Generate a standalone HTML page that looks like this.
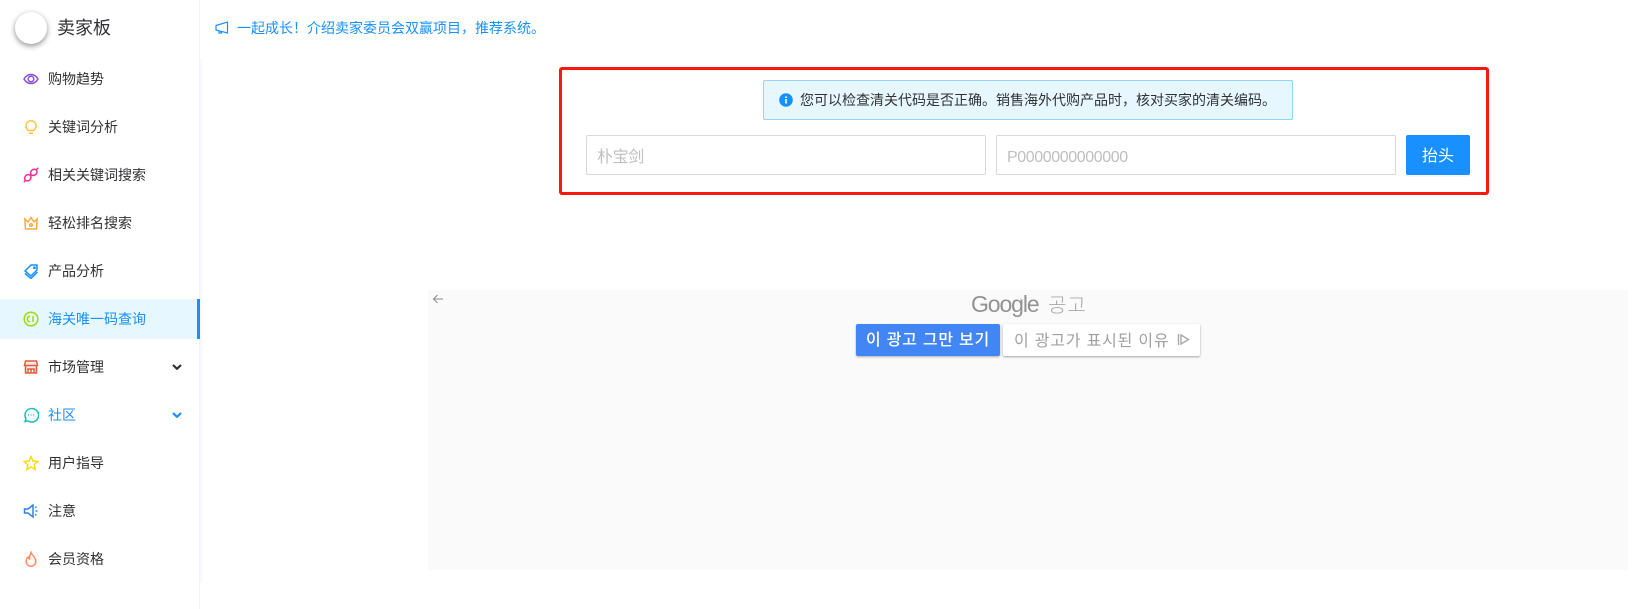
<!DOCTYPE html>
<html lang="zh"><head><meta charset="utf-8"><title>卖家板</title>
<style>
*{box-sizing:border-box}
html,body{margin:0;padding:0;width:1644px;height:609px;overflow:hidden;background:#fff;font-family:"Liberation Sans","Noto Sans CJK SC",sans-serif;color:#303133}
.abs{position:absolute}
.side{position:absolute;left:0;top:0;width:200px;height:609px;background:#fff;border-right:1px solid #f2f3f7}
.shade{position:absolute;left:200px;top:59px;width:4px;height:524px;background:linear-gradient(90deg,#f6f7fd,#fff)}
.item{position:absolute;left:0;width:200px;height:40px;line-height:40px;font-size:14px;padding-left:48px;color:#303133;white-space:nowrap}
.item svg{position:absolute;left:23px;top:12px;width:16px;height:16px;fill:none;stroke-width:1.500}
.item.on{background:#e6f7ff;color:#1890ff}
.item.on::after{content:"";position:absolute;right:0;top:0;width:3px;height:40px;background:#1890ff}
.item svg.chev{left:172px;top:17px;width:10px;height:6px;stroke-width:2.200}
.box{position:absolute;left:559px;top:67px;width:930px;height:128px;border:3px solid #f5190f;border-radius:3px}
.alert{position:absolute;left:763px;top:80px;width:530px;height:40px;background:#e6f7ff;border:1px solid #91d5ff;border-radius:2px;font-size:14px;line-height:38px;padding-left:36px;color:#303133;white-space:nowrap}
.inp{position:absolute;top:135px;height:40px;background:#fff;border:1px solid #d9d9d9;border-radius:2px;color:#bfbfbf;font-size:16px;line-height:44px;padding-left:10px;letter-spacing:-.4px}
.btn{position:absolute;left:1406px;top:135px;width:64px;height:40px;background:#1890ff;color:#fff;border-radius:2px;font-size:16px;line-height:43px;text-align:center;box-shadow:0 2px 0 rgba(0,0,0,.03)}
.ad{position:absolute;left:428px;top:290px;width:1200px;height:280px;background:#fafafa}
.kr{font-family:"Liberation Sans","Noto Sans CJK KR",sans-serif;white-space:nowrap}
</style></head><body>
<div class="side"></div><div class="shade"></div>
<div class="abs" style="left:15px;top:12px;width:32px;height:32px;border-radius:50%;background:#fff;box-shadow:0 2px 6px rgba(0,0,0,.45)"></div>
<div class="abs" style="left:57px;top:14px;font-size:18px;line-height:28px;color:#303133">卖家板</div>

<div class="item" style="top:59px">购物趋势<svg viewBox="0 0 16 16" stroke="#8a4fd8"><path d="M1 8C3 4.500 5.500 3.500 8 3.500S13 4.500 15 8C13 11.500 10.500 12.500 8 12.500S3 11.500 1 8Z"/><circle cx="8" cy="8" r="2.800"/></svg></div>
<div class="item" style="top:107px">关键词分析<svg viewBox="0 0 16 16" stroke="#ffc53d"><path d="M5.500 11.500C4 10.500 3 9 3 6.800A5 5 0 0 1 13 6.800C13 9 12 10.500 10.500 11.500Z"/><path d="M6 14.200H10"/></svg></div>
<div class="item" style="top:155px">相关关键词搜索<svg viewBox="0 0 16 16" stroke="#eb2f96"><ellipse cx="4.800" cy="10.800" rx="3.400" ry="2.900" transform="rotate(-40 4.800 10.800)"/><ellipse cx="10.800" cy="5.400" rx="3.400" ry="2.900" transform="rotate(-40 10.800 5.400)"/><path d="M.8 15L2.300 13.500M13.500 2.500L15.200 .8"/></svg></div>
<div class="item" style="top:203px">轻松排名搜索<svg viewBox="0 0 16 16" stroke="#ffa940"><path d="M1.800 4L5 7L8 2.500L11 7L14.200 4L13.500 14H2.500Z"/><circle cx="8" cy="10" r="1.300"/></svg></div>
<div class="item" style="top:251px">产品分析<svg viewBox="0 0 16 16" stroke="#1890ff"><path d="M2 8L8 2H14V7L8 13Z"/><path d="M2 10.500L8 15.500L14.500 9"/><circle cx="11.500" cy="4.800" r=".7"/></svg></div>
<div class="item on" style="top:299px">海关唯一码查询<svg viewBox="0 0 16 16" stroke="#a0d911"><circle cx="8" cy="8" r="6.800"/><path d="M7 5.600C5.500 4.900 4.500 6 4.500 8S5.500 11.100 7 10.400M10 5V11"/></svg></div>
<div class="item" style="top:347px">市场管理<svg viewBox="0 0 16 16" stroke="#d4380d" style="opacity:.8"><path d="M2.500 2H13.500L14.500 6.500H1.500ZM2.500 6.500V14H13.500V6.500M5 14V10H11V14M8 10V14" fill="#fbe3dc"/></svg><svg class="chev" viewBox="0 0 10 6" stroke="#303133"><path d="M1 1L5 4.800L9 1"/></svg></div>
<div class="item" style="top:395px;color:#1890ff">社区<svg viewBox="0 0 16 16" stroke="#13c2c2"><path d="M2 14.500L3 11.800A6.800 6.800 0 1 1 5 13.900Z"/><path d="M5 8H5.900M7.600 8H8.500M10.200 8H11.100"/></svg><svg class="chev" viewBox="0 0 10 6" stroke="#1890ff"><path d="M1 1L5 4.800L9 1"/></svg></div>
<div class="item" style="top:443px">用户指导<svg viewBox="0 0 16 16" stroke="#fadb14"><path d="M8 1.500L10 6L14.800 6.500L11.200 9.700L12.200 14.500L8 12L3.800 14.500L4.800 9.700L1.200 6.500L6 6Z"/></svg></div>
<div class="item" style="top:491px">注意<svg viewBox="0 0 16 16" stroke="#2f80ed"><path d="M1.500 6H5L10 2V14L5 10H1.500Z"/><path d="M12 4.500L13.500 3.800M12.500 8H14.500M12 11.500L13.500 12.200"/></svg></div>
<div class="item" style="top:539px">会员资格<svg viewBox="0 0 16 16" stroke="#ff7a45" style="opacity:.85"><path d="M8 1.500C8.500 4 12.800 6 12.800 10.500A4.800 4.800 0 0 1 3.200 10.500C3.200 8.500 4 7 5 6C5.200 7.200 5.800 7.800 6.500 8C6.500 5.500 7 3.500 8 1.500Z"/></svg></div>

<svg class="abs" style="left:215px;top:21px" width="14" height="14" viewBox="0 0 14 14" fill="none" stroke="#1890ff" stroke-width="1.200"><path d="M1 4.500L12.500 1V12L1 9Z"/><path d="M4 10V12H6.500V10.800"/></svg>
<div class="abs" style="left:237px;top:17px;font-size:14px;line-height:22px;color:#1890ff;white-space:nowrap">一起成长！介绍卖家委员会双赢项目，推荐系统。</div>

<div class="box"></div>
<div class="alert">您可以检查清关代码是否正确。销售海外代购产品时，核对买家的清关编码。</div>
<svg class="abs" style="left:779px;top:93px" width="14" height="14" viewBox="0 0 14 14"><circle cx="7" cy="7" r="6.800" fill="#1890ff"/><rect x="6.200" y="6" width="1.600" height="4.600" fill="#fff"/><rect x="6.200" y="3.400" width="1.600" height="1.600" fill="#fff"/></svg>
<div class="inp" style="left:586px;width:400px">朴宝剑</div>
<div class="inp" style="left:996px;width:400px">P0000000000000</div>
<div class="btn">抬头</div>

<div class="ad"></div>
<svg class="abs" style="left:432px;top:293px" width="12" height="12" viewBox="0 0 12 12" fill="none" stroke="#8a8a8a" stroke-width="1"><path d="M11 6H1.500M5.500 2L1.500 6L5.500 10"/></svg>
<div class="abs" style="left:971px;top:288px;font-size:23px;line-height:32px;color:#929292;letter-spacing:-1.100px;white-space:nowrap">Google</div>
<div class="abs kr" style="left:1048px;top:290px;font-size:20px;line-height:32px;color:#a8a8a8;letter-spacing:1px;font-weight:300">공고</div>
<div class="abs kr" style="left:856px;top:324px;width:144px;height:32px;background:#4285f4;border-radius:2px;box-shadow:0 1px 2px rgba(0,0,0,.3);color:#fff;font-size:16px;line-height:33px;text-align:center;font-weight:500;letter-spacing:.75px">이 광고 그만 보기</div>
<div class="abs kr" style="left:1003px;top:324px;width:197px;height:32px;background:#fff;border-radius:2px;box-shadow:0 1px 2px rgba(0,0,0,.35);color:#a0a0a0;font-size:16px;line-height:35px;padding-left:11px;letter-spacing:.8px">이 광고가 표시된 이유</div>
<svg class="abs" style="left:1177px;top:333px" width="13" height="13" viewBox="0 0 13 13" fill="none" stroke="#a8a8a8" stroke-width="1.400"><path d="M1.500 1V12M4 2L11.500 6.500L4 11Z"/></svg>
</body></html>
